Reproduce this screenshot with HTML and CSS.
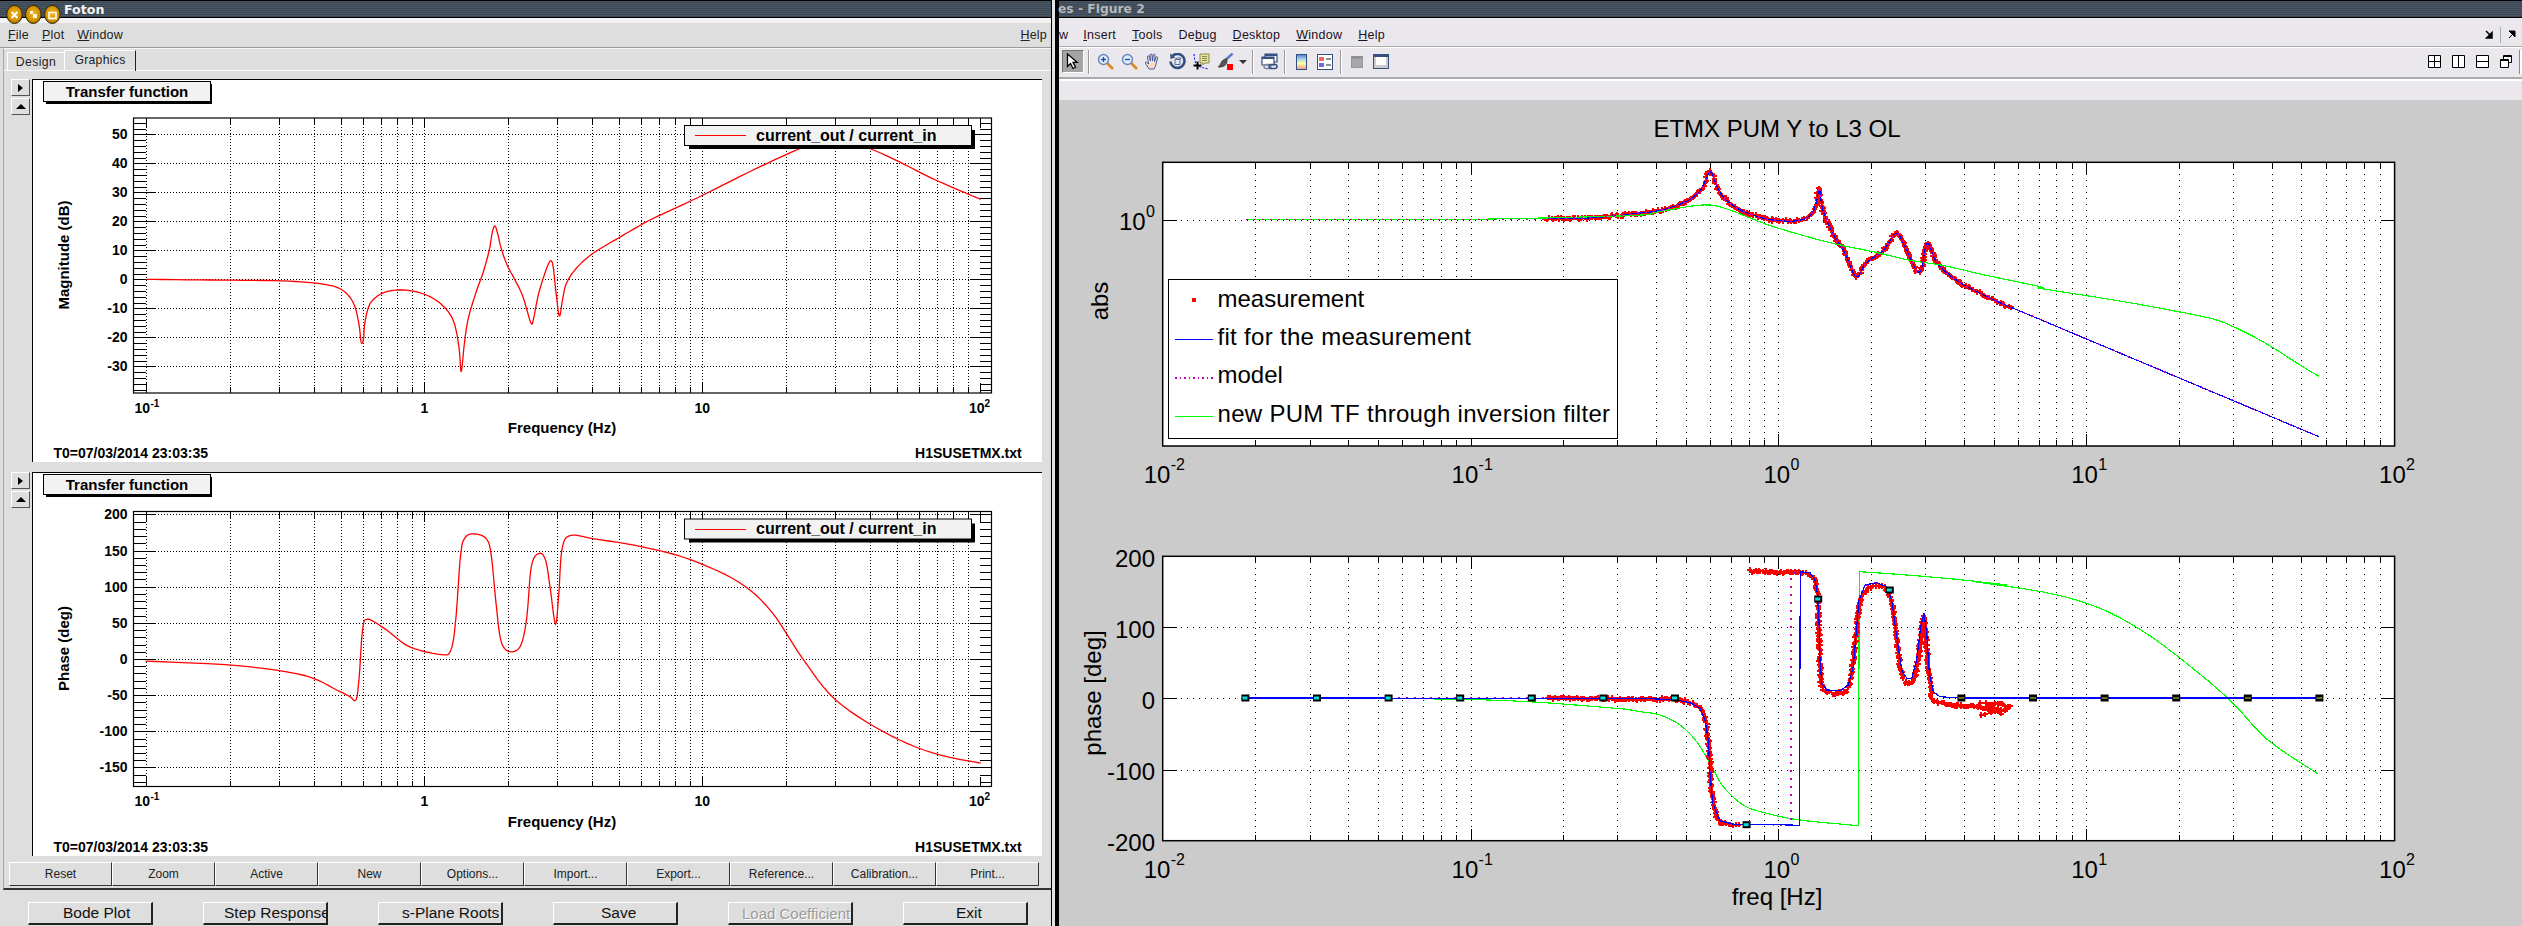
FILE: index.html
```html
<!DOCTYPE html>
<html lang="en">
<head>
<meta charset="utf-8">
<title>Foton and Figure 2</title>
<link rel="stylesheet" href="styles.css">
</head>
<body>
<section class="foton">
  <header class="titlebar">
    <svg class="wm-buttons" width="64" height="24" viewBox="0 0 64 24">
      <defs>
        <radialGradient id="gold" cx="50%" cy="45%" r="60%">
          <stop offset="0" stop-color="#f6b820"/><stop offset=".7" stop-color="#d09000"/><stop offset="1" stop-color="#6d4a00"/>
        </radialGradient>
      </defs>
      <ellipse cx="14.5" cy="13.5" rx="7.8" ry="9" fill="url(#gold)" stroke="#3a2a00"/>
      <ellipse cx="33.3" cy="13.5" rx="7.8" ry="9" fill="url(#gold)" stroke="#3a2a00"/>
      <ellipse cx="52.3" cy="13.5" rx="7.8" ry="9" fill="url(#gold)" stroke="#3a2a00"/>
      <path d="M11.5 11l6 6M17.5 11l-6 6" stroke="#fff" stroke-width="2"/>
      <path d="M30 10h3v3h-3zM33 13h4v4h-4z" fill="#fff" opacity=".85"/>
      <rect x="49" y="11.5" width="7" height="6" fill="none" stroke="#fff" stroke-width="1.6"/>
    </svg>
    <span class="title-text">Foton</span>
  </header>
  <div class="strip"></div>
  <nav class="menubar">
    <span><u>F</u>ile</span><span><u>P</u>lot</span><span><u>W</u>indow</span>
    <span class="menu-help"><u>H</u>elp</span>
  </nav>
  <div class="tabframe">
    <div class="tabs">
      <span class="tab">Design</span>
      <span class="tab tab-active">Graphics</span>
    </div>
    <div class="pane">
      <div class="side">
        <button class="mini"><i class="tri-right"></i></button>
        <button class="mini"><i class="tri-up"></i></button>
      </div>
      <svg class="canvas canvas-mag" id="mag" viewBox="33 79 1010 383"></svg>
    </div>
    <div class="pane pane-second">
      <div class="side">
        <button class="mini"><i class="tri-right"></i></button>
        <button class="mini"><i class="tri-up"></i></button>
      </div>
      <svg class="canvas canvas-phase" id="phase" viewBox="33 472 1010 384"></svg>
    </div>
    <div class="btnrow">
      <button>Reset</button><button>Zoom</button><button>Active</button><button>New</button><button>Options...</button>
      <button>Import...</button><button>Export...</button><button>Reference...</button><button>Calibration...</button><button>Print...</button>
    </div>
  </div>
  <div class="actions">
    <button class="a-bode">Bode Plot</button><button class="a-step">Step Response</button><button class="a-roots">s-Plane Roots</button>
    <button class="a-save">Save</button><button class="a-load">Load Coefficient</button><button class="a-exit">Exit</button>
  </div>
</section>
<div class="win-gap"></div>
<div class="win-divider"></div>
<section class="figure">
  <header class="titlebar"><span class="fig-title">es - Figure 2</span></header>
  <nav class="fig-menu">
    <span class="menu-cut">w</span><span><u>I</u>nsert</span><span><u>T</u>ools</span><span>De<u>b</u>ug</span><span><u>D</u>esktop</span><span><u>W</u>indow</span><span><u>H</u>elp</span>
    <span class="fig-arrows">
      <svg width="9" height="9" viewBox="0 0 9 9"><path d="M1 1l5 5M7 2.500v5.500h-5.500z" stroke="#000" stroke-width="1.500" fill="#000"/></svg>
      <i class="vsep"></i>
      <svg width="9" height="9" viewBox="0 0 9 9"><path d="M2 8l5-5M2 1h6v6z" stroke="#000" stroke-width="1" fill="#000"/></svg>
    </span>
  </nav>
  <div class="toolbar">
    <span class="tool-selected">
      <svg width="15" height="17" viewBox="0 0 15 17"><path d="M1.500 1v12.500l3-3 2.500 5 2.500-1.200-2.500-5h4.200z" fill="#fff" stroke="#000" stroke-width="1.300"/></svg>
    </span>
    <i class="sep"></i>
    <span class="tool"><svg width="17" height="17" viewBox="0 0 17 17"><path d="M10 10l6 6" stroke="#d68a20" stroke-width="2.600"/><circle cx="6.500" cy="6.500" r="5" fill="#dcecff" stroke="#6b86b8" stroke-width="1.400"/><path d="M4 6.500h5M6.500 4v5" stroke="#2a4aa0" stroke-width="1.300"/></svg></span>
    <span class="tool"><svg width="17" height="17" viewBox="0 0 17 17"><path d="M10 10l6 6" stroke="#d68a20" stroke-width="2.600"/><circle cx="6.500" cy="6.500" r="5" fill="#dcecff" stroke="#6b86b8" stroke-width="1.400"/><path d="M4 6.500h5" stroke="#2a4aa0" stroke-width="1.300"/></svg></span>
    <span class="tool"><svg width="17" height="17" viewBox="0 0 17 17"><path d="M4 16c-1-2-3-4-3.500-6s1.500-1 3 1L2.500 4c0-1.500 1.500-1.500 2 0l1 4-.5-6c0-1.500 2-1.500 2 0l.5 6 .8-6c.2-1.500 2-1 1.800.5l-.6 6 1.500-4c.5-1.300 2-.8 1.600.6l-1.600 6c-.3 2-1 3.500-2 4.900z" fill="#fbdcc0" stroke="#3050a0" stroke-width=".9"/></svg></span>
    <span class="tool"><svg width="17" height="17" viewBox="0 0 17 17"><path d="M3 3.500A7 7 0 1 1 1.500 8.500" fill="none" stroke="#33507e" stroke-width="2.600"/><path d="M1 .5l.5 5.500 5-1.500z" fill="#33507e"/><path d="M6 6.500h5v5h-5zM6 6.500l2 -1.500h4l-1 1.500" fill="#dfe7f2" stroke="#33507e" stroke-width=".8"/></svg></span>
    <span class="tool"><svg width="17" height="17" viewBox="0 0 17 17"><path d="M7 1h9v9h-4l-2 2v-2h-3z" fill="#e8e29a" stroke="#8a8a50"/><path d="M9 3.500h5M9 5.500h5M9 7.500h5" stroke="#8a8a50"/><path d="M1 1c.5 5 1 9 3 11s6 3 12 4" fill="none" stroke="#00f" stroke-dasharray="2 1.500"/><path d="M4.500 8.500v8M.5 12.500h8" stroke="#000" stroke-width="2"/></svg></span>
    <span class="tool"><svg width="17" height="17" viewBox="0 0 17 17"><path d="M15.500 .5L8.500 7" stroke="#5577cc" stroke-width="2.400"/><path d="M9.500 6c-3 0-5 2-5.500 4-.5 1.500-2 3-3 4 3 .5 6-.5 7.500-2 1.500-1.700 2-4 1-6z" fill="#555" stroke="#222" stroke-width=".6"/><rect x="10" y="11" width="6" height="6" fill="#f00"/></svg></span>
    <span class="tool-drop"><i class="tri-down"></i></span>
    <i class="sep"></i>
    <span class="tool"><svg width="17" height="17" viewBox="0 0 17 17"><path d="M4 1h12v8H4z" fill="#fff" stroke="#33507e" stroke-width="1.200"/><path d="M4 1h12v2H4z" fill="#33507e"/><path d="M1 4h12v8H1z" fill="#fff" stroke="#33507e" stroke-width="1.200"/><path d="M1 4h12v2H1z" fill="#33507e"/><rect x="3" y="11.500" width="7" height="4" rx="2" fill="none" stroke="#7a8ca8" stroke-width="1.500"/><rect x="8" y="11.500" width="8" height="4" rx="2" fill="none" stroke="#33507e" stroke-width="1.500"/></svg></span>
    <i class="sep"></i>
    <span class="tool"><svg width="11" height="16" viewBox="0 0 11 16"><defs><linearGradient id="cb" x2="0" y2="1"><stop offset="0" stop-color="#5577e0"/><stop offset=".35" stop-color="#aee0e0"/><stop offset=".6" stop-color="#ffffa0"/><stop offset="1" stop-color="#f09090"/></linearGradient></defs><rect x=".5" y=".5" width="10" height="15" fill="url(#cb)" stroke="#33507e"/></svg></span>
    <span class="tool"><svg width="16" height="16" viewBox="0 0 16 16"><rect x=".5" y=".5" width="15" height="15" fill="#fff" stroke="#33507e"/><rect x="2" y="3" width="5" height="4" fill="#e86868"/><rect x="2" y="9" width="5" height="4" fill="#6868e8"/><path d="M9 5h5M9 11h5" stroke="#222"/></svg></span>
    <i class="sep"></i>
    <span class="tool"><svg width="12" height="12" viewBox="0 0 12 12"><rect x=".5" y=".5" width="11" height="11" fill="#a8a8a8" stroke="#999"/><rect x=".5" y=".5" width="11" height="2" fill="#8a8a8a"/></svg></span>
    <span class="tool"><svg width="16" height="15" viewBox="0 0 16 15"><rect x=".5" y=".5" width="15" height="14" fill="#ccc" stroke="#33507e"/><rect x=".5" y=".5" width="15" height="2.500" fill="#33507e"/><rect x="3" y="3" width="10" height="8" fill="#fff"/></svg></span>
    <span class="layout-icons">
      <svg width="14" height="14" viewBox="0 0 14 14"><path d="M.5.500h12v12H.5zM6.500.500v12M.5 6.500h12" fill="#fff" stroke="#000"/></svg>
      <svg width="14" height="14" viewBox="0 0 14 14"><path d="M.5.500h12v12H.5zM6.500.500v12" fill="#fff" stroke="#000"/></svg>
      <svg width="14" height="14" viewBox="0 0 14 14"><path d="M.5.500h12v12H.5zM.5 6.500h12" fill="#fff" stroke="#000"/></svg>
      <svg width="13" height="14" viewBox="0 0 13 14"><path d="M3.500.500h8v7h-8z" fill="#fff" stroke="#000"/><path d="M3.500 1.500h8" stroke="#000"/><path d="M.5 4.500h8v8h-8z" fill="#fff" stroke="#000"/><path d="M.5 5.500h8" stroke="#000"/></svg>
      <i class="tool-edge"></i>
    </span>
  </div>
  <div class="subband"></div>
  <svg class="plotarea" id="fig" viewBox="1059 100 1463 826"></svg>
</section>
<script src="script.js"></script>
</body>
</html>
```
FILE: styles.css
```css
* { box-sizing: border-box; }
html, body { margin: 0; padding: 0; }
body {
  width: 2522px; height: 926px; overflow: hidden; display: flex;
  font-family: "Liberation Sans", Arial, sans-serif; background: #dedede; color: #000;
}
button { font-family: inherit; padding: 0; margin: 0; }

.titlebar {
  position: relative; height: 18px; flex: none; display: flex; align-items: center;
  border-top: 1px solid #000; border-bottom: 1px solid #000;
  background: repeating-linear-gradient(#4b5865 0 1px, #3a4551 1px 2px);
  font-family: "DejaVu Sans", sans-serif; font-weight: 700; font-size: 12.6px;
}
.wm-buttons { position: absolute; left: 0; top: 0; z-index: 2; }
.title-text { margin-left: 64px; color: #f4f4f4; }
.fig-title { margin-left: -1px; color: #b4b8bc; font-size: 12.3px; }

.foton { width: 1052px; height: 926px; flex: none; display: flex; flex-direction: column; background: #dedede; border-right: 1px solid #000; }
.win-gap { width: 3px; flex: none; background: #e4e4e4; }
.win-divider { width: 4px; flex: none; background: #000; }
.strip { height: 5px; flex: none; background: #f3f3f3; }
.menubar { height: 25px; flex: none; display: flex; align-items: center; gap: 13px; padding: 0 4px 0 8px; font-size: 12.5px; letter-spacing: .2px; color: #222; border-bottom: 1px solid #999; }
.menu-help { margin-left: auto; }
.tabframe { height: 842px; flex: none; margin-left: 3px; border-left: 1px solid #a6a6a6; border-top: 1px solid #f6f6f6; border-bottom: 2px solid #333; }
.tabs { height: 30px; padding: 2px 0 0 3px; display: flex; align-items: flex-end; background: linear-gradient(#dedede 21px, #f8f8f8 21px 22px, #dedede 22px); }
.tab { height: 19px; width: 57px; margin-bottom: 8px; font-size: 12.2px; letter-spacing: .4px; display: flex; align-items: center; justify-content: center; color: #222; border-top: 1px solid #fff; border-left: 1px solid #fff; }
.tab-active { height: 21px; width: 72px; border-right: 1px solid #222; padding-bottom: 3px; letter-spacing: .3px; }
.pane { display: flex; height: 383px; }
.pane-second { height: 384px; margin-top: 10px; }
.side { width: 28px; flex: none; padding-left: 7px; display: flex; flex-direction: column; gap: 2px; }
.mini { width: 19px; height: 17px; display: flex; align-items: center; justify-content: center; background: #dedede; border: none; border-top: 1px solid #fff; border-left: 1px solid #fff; border-right: 1px solid #555; border-bottom: 1px solid #555; }
.tri-right { width: 0; height: 0; border-left: 5px solid #000; border-top: 4px solid transparent; border-bottom: 4px solid transparent; }
.tri-up { width: 0; height: 0; border-bottom: 5px solid #000; border-left: 5px solid transparent; border-right: 5px solid transparent; }
.tri-down { display: block; width: 0; height: 0; border-top: 4px solid #333; border-left: 4px solid transparent; border-right: 4px solid transparent; }
.canvas { width: 1010px; display: block; flex: none; background: #fff; }
.canvas-mag { height: 383px; }
.canvas-phase { height: 384px; }
.btnrow { display: flex; margin: 6px 0 0 5px; width: 1030px; height: 24px; }
.btnrow button { flex: 1; font-size: 12px; color: #222; background: #dedede; border: none; border-top: 1px solid #fff; border-left: 1px solid #fff; border-right: 1px solid #333; border-bottom: 1px solid #333; }
.actions { display: flex; gap: 50px; margin-top: 12px; padding-left: 28px; height: 23px; }
.actions button { width: 125px; height: 23px; overflow: hidden; white-space: nowrap; font-size: 15.5px; color: #111; background: #dedede; border: none; border-top: 1px solid #fff; border-left: 1px solid #fff; border-right: 2px solid #222; border-bottom: 2px solid #222; text-align: left; }
.actions .a-bode { padding-left: 34px; }
.actions .a-step { padding-left: 20px; }
.actions .a-roots { padding-left: 23px; }
.actions .a-save { padding-left: 47px; }
.actions .a-load { padding-left: 13px; font-size: 15px; color: #9a9a9a; text-shadow: 1px 1px 0 #fff; }
.actions .a-exit { padding-left: 52px; }

.figure { flex: 1; min-width: 0; height: 926px; display: flex; flex-direction: column; background: #eae8ed; }
.fig-menu { height: 28px; flex: none; display: flex; align-items: center; gap: 16px; padding: 5px 6px 0 0; font-size: 12.5px; letter-spacing: .25px; color: #1d0f24; }
.menu-cut { margin-right: -1px; }
.fig-arrows { margin-left: auto; display: flex; align-items: center; gap: 6px; }
.vsep { display: block; width: 1px; height: 16px; background: #aaa; }
.toolbar { height: 33px; flex: none; display: flex; align-items: center; padding: 0 0 1px 3px; background: #eae8ed; border-top: 1px solid #aaa; box-shadow: inset 0 1px 0 #fff; border-bottom: 2px solid #aaa; }
.tool-selected { width: 22px; height: 23px; margin-right: 1px; background: #a4a4a4; border: 1px solid #777; border-right-color: #fff; border-bottom-color: #fff; display: flex; align-items: center; justify-content: center; }
.sep { display: block; width: 1px; height: 24px; margin: 0 4px 0 3px; background: #999; box-shadow: 1px 0 0 #fff; }
.tool { width: 24px; height: 24px; flex: none; display: flex; align-items: center; justify-content: center; }
.tool-drop { width: 12px; flex: none; display: flex; justify-content: center; }
.layout-icons { margin-left: auto; display: flex; align-items: center; gap: 10px; }
.tool-edge { display: block; width: 3px; height: 24px; margin-left: -4px; border-left: 1px solid #888; background: #fff; }
.subband { height: 21px; flex: none; border-top: 2px solid #fff; }
.plotarea { display: block; width: 1463px; height: 826px; flex: none; background: #cbcbcb; }
```
FILE: script.js
```js
var NS = 'http://www.w3.org/2000/svg';
function el(parent, name, attrs, text) {
  var n = document.createElementNS(NS, name);
  for (var k in attrs) n.setAttribute(k, attrs[k]);
  if (text !== undefined) n.textContent = text;
  parent.appendChild(n);
  return n;
}
function pts(a) { return a.map(function (p) { return p[0].toFixed(1) + ',' + p[1].toFixed(1); }).join(' '); }
function poly(s, a, color, w, extra) {
  var o = { points: pts(a), fill: 'none', stroke: color, 'stroke-width': w };
  for (var k in (extra || {})) o[k] = extra[k];
  return el(s, 'polyline', o);
}
function line(s, x1, y1, x2, y2, w, extra) {
  var o = { x1: x1, y1: y1, x2: x2, y2: y2, stroke: '#000', 'stroke-width': w || 1, 'shape-rendering': 'crispEdges' };
  for (var k in (extra || {})) o[k] = extra[k];
  return el(s, 'line', o);
}
function txt(s, x, y, t, size, bold, anchor, extra) {
  var o = { x: x, y: y, 'font-family': '"Liberation Sans", Arial, sans-serif', 'font-size': size, fill: '#000' };
  if (bold) o['font-weight'] = 700;
  if (anchor) o['text-anchor'] = anchor;
  for (var k in (extra || {})) o[k] = extra[k];
  return el(s, 'text', o, t);
}
function rx(a) { return a.map(function (p) { return [p[0] * 1.6084, p[1] * 1.6084]; }); }
/* Catmull-Rom resampling so hand-read curves stay smooth */
function smooth(a) {
  var out = [];
  for (var i = 0; i < a.length - 1; i++) {
    var p0 = a[Math.max(i - 1, 0)], p1 = a[i], p2 = a[i + 1], p3 = a[Math.min(i + 2, a.length - 1)];
    for (var j = 0; j < 6; j++) {
      var t = j / 6, t2 = t * t, t3 = t2 * t;
      out.push([0, 1].map(function (c) {
        return 0.5 * (2 * p1[c] + (p2[c] - p0[c]) * t + (2 * p0[c] - 5 * p1[c] + 4 * p2[c] - p3[c]) * t2 + (3 * p1[c] - p0[c] - 3 * p2[c] + p3[c]) * t3);
      }));
    }
  }
  out.push(a[a.length - 1]);
  return out;
}

/* ---------- Foton panes ---------- */
function fotonPlot(s, cfg) {
  var L = 134.5, R = 992.5, T = cfg.top, B = cfg.bottom;
  var fx = function (f) { return 147.3 + 278 * Math.log10(f / 0.1); };
  el(s, 'rect', { x: 33, y: cfg.canvasTop, width: 1010, height: 1, fill: '#000' });
  el(s, 'rect', { x: 33, y: cfg.canvasTop, width: 1, height: 400, fill: '#000' });
  var dots = { 'stroke-dasharray': '1 2' };
  for (var d = 0.1; d < 100; d *= 10) {
    for (var m = 1; m < 10; m++) {
      var x = Math.round(fx(d * m)) + .5;
      line(s, x, T, x, B, 1, dots);
      var len = m === 1 ? 10 : 6;
      line(s, x, T, x, T + len);
      line(s, x, B - len, x, B);
    }
  }
  var x100 = Math.round(fx(100)) + .5;
  line(s, x100, T, x100, T + 10); line(s, x100, B - 10, x100, B);
  cfg.majors.forEach(function (v) {
    var y = Math.round(cfg.y(v)) + .5;
    line(s, L, y, R, y, 1, dots);
    line(s, L, y, L + 22, y); line(s, R - 22, y, R, y);
    txt(s, 128.5, cfg.y(v) + 5, String(v), 14, true, 'end');
  });
  cfg.minors.forEach(function (v) {
    var y = Math.round(cfg.y(v)) + .5;
    line(s, L, y, L + 12, y); line(s, R - 12, y, R, y);
  });
  el(s, 'rect', { x: L, y: T, width: R - L, height: B - T, fill: 'none', stroke: '#000', 'stroke-width': 1.2 });
  poly(s, cfg.curve, '#f00', 1.3);
  var lab = B + 19.5;
  txt(s, 135.5, lab, '10', 14, true);
  txt(s, 151.5, lab - 6, '-1', 10, true);
  txt(s, 425.3, lab, '1', 14, true, 'middle');
  txt(s, 703.3, lab, '10', 14, true, 'middle');
  txt(s, 970, lab, '10', 14, true);
  txt(s, 985.5, lab - 6, '2', 10, true);
  txt(s, 563, B + 40, 'Frequency (Hz)', 15, true, 'middle');
  var cy = (T + B) / 2 - 0.5;
  txt(s, 70, cy, cfg.ylabel, 15, true, 'middle', { transform: 'rotate(-90 70 ' + cy + ')' });
  txt(s, 54.5, B + 65, 'T0=07/03/2014 23:03:35', 14, true);
  txt(s, 1022.7, B + 65, 'H1SUSETMX.txt', 14, true, 'end');
  var ty = cfg.canvasTop + 2;
  el(s, 'rect', { x: 47, y: ty + 3, width: 166, height: 20, fill: '#000' });
  el(s, 'rect', { x: 44.5, y: ty + .5, width: 167, height: 20, fill: '#f2f2f2', stroke: '#000' });
  txt(s, 128, ty + 15.5, 'Transfer function', 15, true, 'middle');
  var ly = T + 7;
  el(s, 'rect', { x: 690, y: ly + 5, width: 286, height: 19, fill: '#000' });
  el(s, 'rect', { x: 685.5, y: ly + .5, width: 287, height: 20, fill: '#f2f2f2', stroke: '#000' });
  line(s, 696, ly + 10.5, 747, ly + 10.5, 1, { stroke: '#f00' });
  txt(s, 757, ly + 15.5, 'current_out / current_in', 16, true);
}
var z10 = function (a) { return a.map(function (p) { return [p[0] / 2.529, 190 + p[1] / 3]; }); };
var magCurve = smooth(z10([[373,268],[535,270],[695,272],[790,278],[840,287],[865,298],[885,318],[900,350],[910,400],[915,450],[918,460],[922,445],[925,400],[935,350],[950,325],[975,307],[1010,300],[1050,304],[1090,320],[1125,350],[1150,395],[1163,470],[1168,542],[1172,520],[1177,460],[1185,395],[1195,350],[1210,295],[1225,245],[1240,180],[1247,130],[1254,108],[1262,135],[1270,175],[1285,225],[1305,270],[1325,320],[1345,398],[1352,385],[1365,310],[1385,235],[1396,212],[1402,235],[1408,300],[1417,378],[1425,330],[1435,280],[1460,235],[1500,192],[1568,143]])
  .concat([[640,226],[653,219],[700,197],[750,172],[800,149],[835,137],[871.7,149],[900,161.7],[933,178.3],[966.7,193],[981.7,199.3]]));
function range(a, b, st) { var r = []; for (var v = a; v <= b; v += st) r.push(v); return r; }
fotonPlot(document.getElementById('mag'), {
  canvasTop: 79, top: 118, bottom: 393,
  y: function (v) { return 279.3 - 2.9 * v; },
  majors: [50, 40, 30, 20, 10, 0, -10, -20, -30], minors: range(-38, 54, 2),
  curve: magCurve, ylabel: 'Magnitude (dB)'
});
var phaseCurve = smooth(rx([[91,411],[150,414],[190,420],[210,429],[218,433],[222,435],[224,420],[226,392],[229,385],[240,391],[255,402],[275,407],[281,404],[284,385],[287,345],[290,334],[296,332],[303,335],[306,345],[309,375],[312,398],[317,405],[324,402],[328,385],[331,352],[336,344],[340,349],[343,368],[346,388],[348,370],[350,342],[355,333],[370,335],[400,340],[430,348],[460,362],[480,380],[500,410],[520,435],[550,455],[580,468],[610.4,474.5]]));
fotonPlot(document.getElementById('phase'), {
  canvasTop: 472, top: 511.5, bottom: 786.5,
  y: function (v) { return 659 - 0.7233 * v; },
  majors: [200, 150, 100, 50, 0, -50, -100, -150], minors: range(-170, 200, 10),
  curve: phaseCurve, ylabel: 'Phase (deg)'
});

/* ---------- MATLAB figure ---------- */
var fig = document.getElementById('fig');
var fx = function (e) { return 1162.7 + 307.85 * (e + 2); };
function axes(T, B, hGrid) {
  var L = 1162.7, R = 2394.6;
  el(fig, 'rect', { x: L, y: T, width: R - L, height: B - T, fill: '#fff' });
  var dot = { 'stroke-dasharray': '1 5' };
  for (var e = -2; e < 2; e++) {
    for (var m = 1; m < 10; m++) {
      if (m === 1 && e === -2) continue;
      var x = Math.round(fx(e + Math.log10(m))) + .5;
      line(fig, x, T, x, B, 1, dot);
      var len = m === 1 ? 12 : 6;
      line(fig, x, T, x, T + len);
      line(fig, x, B - len, x, B);
    }
  }
  hGrid.forEach(function (y) {
    var yy = Math.round(y) + .5;
    line(fig, L, yy, R, yy, 1, dot);
    line(fig, L, yy, L + 14, yy); line(fig, R - 14, yy, R, yy);
  });
  el(fig, 'rect', { x: L, y: T, width: R - L, height: B - T, fill: 'none', stroke: '#000', 'stroke-width': 1.5 });
  [['-2', -2], ['-1', -1], ['0', 0], ['1', 1], ['2', 2]].forEach(function (t) {
    var x = fx(t[1]);
    var neg = t[0].charAt(0) === '-';
    var x0 = x - (neg ? 19 : 15);
    txt(fig, x0, B + 37, '10', 24);
    txt(fig, x0 + 27, B + 24, t[0], 16);
  });
}
var z8 = function (a) { return a.map(function (p) { return [1480 + p[0] / 2.8, 150 + p[1] / 3]; }); };
var z9 = function (a) { return a.map(function (p) { return [1640 + p[0] / 3, 560 + p[1] / 3]; }); };
var z12 = function (a) { return a.map(function (p) { return [2000 + p[0] / 3, 160 + p[1] / 3]; }); };
function sample(a, step) {
  var out = [];
  for (var i = 0; i < a.length - 1; i++) {
    var dx = a[i + 1][0] - a[i][0], dy = a[i + 1][1] - a[i][1];
    var d = Math.sqrt(dx * dx + dy * dy), n = Math.max(1, Math.floor(d / step));
    for (var j = 0; j < n; j++) out.push([a[i][0] + dx * j / n, a[i][1] + dy * j / n]);
  }
  return out;
}
var seed = 7;
function rnd() { seed = (seed * 16807) % 2147483647; return seed / 2147483647; }
function crosses(a, amp, color, size, width, step) {
  var d = sample(a, step).map(function (p) {
    var x = p[0] + (rnd() - .5) * amp, y = p[1] + (rnd() - .5) * amp;
    return 'M' + (x - size).toFixed(1) + ' ' + y.toFixed(1) + 'h' + (2 * size) + 'M' + x.toFixed(1) + ' ' + (y - size).toFixed(1) + 'v' + (2 * size);
  }).join('');
  el(fig, 'path', { d: d, fill: 'none', stroke: color, 'stroke-width': width, 'shape-rendering': 'crispEdges' });
}
var aliased = { 'shape-rendering': 'optimizeSpeed' };
var magDots = { 'stroke-dasharray': '2 6', 'shape-rendering': 'crispEdges' };

/* abs plot */
axes(162.3, 446, [220.3]);
var absRed = smooth(z8([[190,206],[320,203],[420,192],[500,182],[570,158],[610,130],[630,95],[645,65],[660,100],[680,140],[720,175],[770,197],[820,210],[880,213],[920,200],[940,165],[950,118],[960,180],[990,255],[1020,305],[1053,380],[1080,340],[1130,300],[1165,250],[1190,290],[1230,368],[1252,280],[1280,340],[1340,395],[1420,440],[1490,475]]));
var absEnd = [[2012.7,308],[2319,436.7]];
var absGreen = [[1246,219.5]].concat(smooth(z8([[0,208],[420,197],[500,185],[570,172],[610,166],[650,166],[700,180],[800,222],[900,255],[1000,283],[1100,305],[1200,330],[1300,347],[1400,372],[1568,410]]).concat(z12([[120,385],[260,407],[400,430],[535,455],[640,477],[700,500],[770,535],[830,570],[900,615],[958,650]]))));
crosses(absRed, 2.5, '#f00', 2.5, 2, 1.4);
poly(fig, absRed.concat(absEnd), '#00f', 1.2, aliased);
poly(fig, absGreen, '#0f0', 1.2, aliased);
poly(fig, [[1246, 219.5], [1548, 219.5]].concat(absRed).concat(absEnd), '#c000c0', 1.6, magDots);

/* legend */
el(fig, 'rect', { x: 1168.5, y: 279.5, width: 449, height: 159, fill: '#fff', stroke: '#000', 'stroke-width': 1 });
el(fig, 'rect', { x: 1192, y: 298, width: 4, height: 4, fill: '#f00' });
line(fig, 1175, 339.5, 1213, 339.5, 1, { stroke: '#00f' });
line(fig, 1175, 377.5, 1213, 377.5, 2, { stroke: '#c000c0', 'stroke-dasharray': '1.5 3' });
line(fig, 1175, 416.5, 1213, 416.5, 1, { stroke: '#0f0' });
var wide = { 'letter-spacing': '.3' };
txt(fig, 1217.5, 306.5, 'measurement', 24);
txt(fig, 1217.5, 345, 'fit for the measurement', 24, false, null, wide);
txt(fig, 1217.5, 383, 'model', 24);
txt(fig, 1217.5, 422, 'new PUM TF through inversion filter', 24, false, null, wide);
txt(fig, 1119, 230, '10', 24);
txt(fig, 1146, 217, '0', 16);
txt(fig, 1108, 301, 'abs', 24, false, 'middle', { transform: 'rotate(-90 1108 301)' });
txt(fig, 1777, 137, 'ETMX PUM Y to L3 OL', 24, false, 'middle');

/* phase plot */
var yb = function (v) { return 698.4 - 0.7114 * v; };
axes(556.3, 840.7, [yb(100), yb(0), yb(-100)]);
[200, 100, 0, -100, -200].forEach(function (v) {
  txt(fig, 1155, yb(v) + 10.5, String(v), 24, false, 'end');
});
var blueA = [[1246, 698]].concat(z9([[0,415],[105,419],[150,428],[180,445],[195,480],[205,540],[210,640],[218,730],[240,783],[280,793],[330,793],[450,795],[478,796]]));
var blueB = z9([[481,35],[510,38],[525,60],[532,100],[537,180],[540,300],[545,370],[560,390],[600,392],[625,375],[640,320],[650,200],[657,120],[675,75],[710,68],[740,80],[755,120],[770,230],[785,330],[800,355],[815,355],[830,300],[842,200],[852,160],[860,220],[868,340],[880,395],[900,410],[960,414],[1200,414]]).concat([[2319, 698]]);
var phBlue = blueA.concat(blueB);
var phMag = blueA.slice(0, -1).concat(z9([[453,795],[453,415],[454,40],[481,35]])).concat(blueB.slice(1));
var phRedA = smooth([[1548, 698]].concat(z9([[0,418],[100,418],[170,435],[190,465],[200,500],[210,600],[215,700],[235,780],[260,790],[300,795]])));
var phRedB = smooth(z9([[328,33],[400,36],[480,37],[520,55],[530,90],[535,160],[540,300],[545,375],[565,398],[600,398],[625,385],[640,310],[650,200],[660,130],[680,90],[710,75],[735,85],[755,125],[770,240],[785,340],[805,370],[825,345],[840,260],[851,170],[860,260],[870,370],[880,420],[920,432],[1000,440],[1085,450],[1110,438]]));
var greenL = smooth(rx([[773,434],[920,435],[1000,440]]).concat(z9([[0,455],[60,465],[120,495],[170,545],[210,610],[250,680],[310,735],[380,760],[480,780],[655,797]])));
var greenR = smooth(z9([[658,35],[800,45],[970,60],[1100,75]]).concat(rx([[1230,362],[1270,368],[1300,376],[1325,388],[1350,405],[1385,434],[1410,460],[1441,481]])));
poly(fig, greenL.concat(greenR), '#0f0', 1.2, aliased);
crosses(phRedA, 2.5, '#f00', 2.5, 2, 1.4);
crosses(phRedB, 2.5, '#f00', 2.5, 2, 1.4);
crosses(z9([[1020,445],[1100,450]]), 14, '#f00', 2.5, 2, 1);
poly(fig, phMag, '#c000c0', 1.6, magDots);
poly(fig, phBlue, '#00f', 1.2, aliased);
for (var n = 0; n < 16; n++) {
  var mx = 1675 + 71.6 * (n - 6), my = 698;
  if (n === 7) my = 824.7;
  if (n === 8) my = 599;
  if (n === 9) my = 590;
  el(fig, 'rect', { x: mx - 4, y: my - 3.5, width: 8, height: 7, fill: '#000' });
  if (n > 9) el(fig, 'rect', { x: mx - 3, y: my - .5, width: 6, height: 1, fill: '#c8e040' });
  else el(fig, 'rect', { x: mx - 3, y: my - 1.5, width: 5, height: 3, fill: '#00e0e0' });
}
txt(fig, 1777, 905, 'freq [Hz]', 24, false, 'middle');
txt(fig, 1101, 693, 'phase [deg]', 24, false, 'middle', { transform: 'rotate(-90 1101 693)' });
```
